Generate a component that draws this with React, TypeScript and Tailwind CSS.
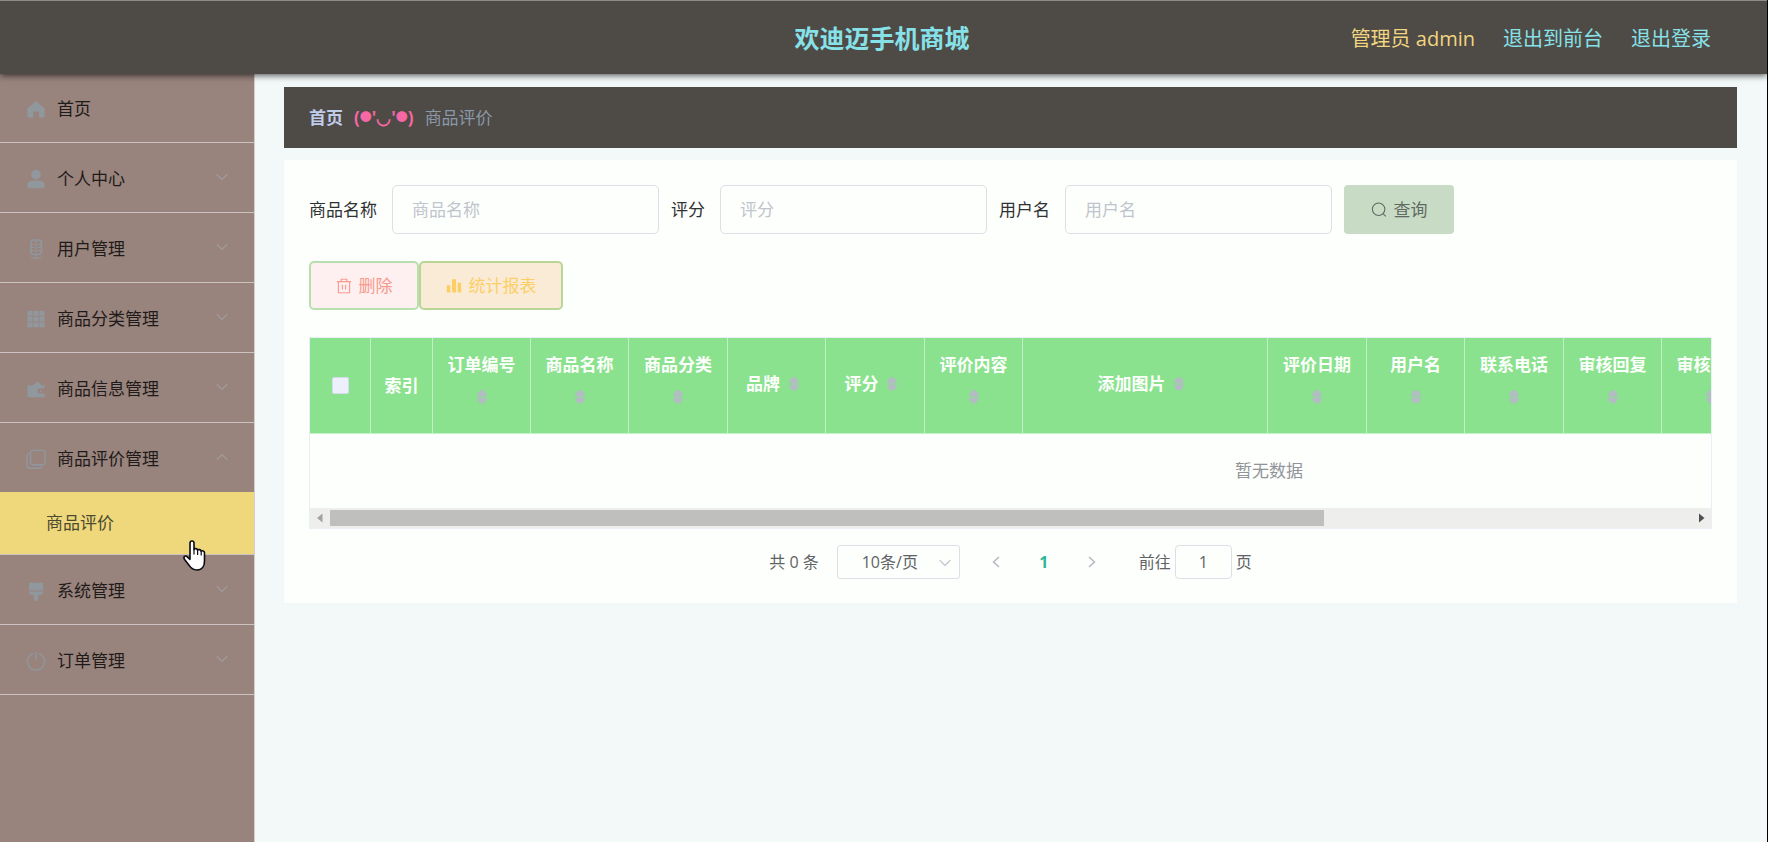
import type { ReactNode } from 'react';

const Icon = ({ children, className = 'size-5' }: { children: ReactNode; className?: string }) => (
  <svg viewBox="0 0 20 20" className={className} fill="none" stroke="currentColor" aria-hidden="true">
    {children}
  </svg>
);

const HomeIcon = () => (
  <Icon>
    <path fill="currentColor" stroke="none" d="M10 2 18.6 9.4V17.6a.8.8 0 0 1-.8.8H13V12.6H7.4V18.4H2.200a.8.8 0 0 1-.8-.8V9.400z" />
  </Icon>
);
const UserIcon = () => (
  <Icon>
    <circle cx="10" cy="5.600" r="4.800" fill="currentColor" stroke="none" />
    <path fill="currentColor" stroke="none" d="M6.600 11.800h7c3.200 0 5 2 5 4.400v1.200c0 1.200-.8 1.800-2 1.800H3.400c-1.200 0-2-.6-2-1.800v-1.200c0-2.400 2-4.400 5.200-4.400z" />
  </Icon>
);
const MicIcon = () => (
  <Icon>
    <rect x="5" y="1" width="10.500" height="14.500" rx="3" strokeWidth="1.600" />
    <path strokeWidth="1.200" d="M10.200 1v19M5 5.500h3.500M12 5.500h3.500M5 8.500h3.500M12 8.500h3.500M5 11.500h3.500M12 11.500h3.500M4.500 19h11.500" />
  </Icon>
);
const GridIcon = () => (
  <Icon>
    {[1.4, 7.4, 13.4].map((x) =>
      [1.8, 7.6, 13.4].map((y) => (
        <rect key={`${x}-${y}`} x={x} y={y} width="5.200" height="5" fill="currentColor" stroke="none" />
      )),
    )}
  </Icon>
);
const WalletIcon = () => (
  <Icon>
    <path fill="currentColor" stroke="none" d="M1.400 6.200h5.400L12 2.200l3.200 4h3.400v3h-4.400a2.700 2.700 0 0 0 0 5.400h4.400v3.600H1.400z" />
    <circle cx="14.800" cy="11.900" r="1" fill="currentColor" stroke="none" />
  </Icon>
);
const CopyIcon = () => (
  <Icon>
    <rect x="4.600" y="1.400" width="14.400" height="14.400" rx="2.200" strokeWidth="1.400" />
    <path strokeWidth="1.400" d="M4.600 4.400H3.400A2.400 2.400 0 0 0 1 6.800v10a2.400 2.400 0 0 0 2.400 2.400h10a2.400 2.400 0 0 0 2.400-2.400" />
  </Icon>
);
const BrushIcon = () => (
  <Icon>
    <path fill="currentColor" stroke="none" d="M3.600 1.800h13a.6.6 0 0 1 .6.600V9.400H3V2.400a.6.6 0 0 1 .6-.6zM3 10.600h14.200v.6a2.600 2.600 0 0 1-2.600 2.600h-2.200v4.400a1.600 1.600 0 0 1-1.600 1.600h-1.400a1.600 1.600 0 0 1-1.600-1.600v-4.400H5.600A2.600 2.600 0 0 1 3 11.200z" />
  </Icon>
);
const PowerIcon = () => (
  <Icon>
    <path strokeWidth="1.400" strokeLinecap="round" d="M10 1v7.600M6.600 2.800a8.500 8.500 0 1 0 6.800 0" />
  </Icon>
);
const Chevron = ({ className }: { className: string }) => (
  <svg viewBox="0 0 12 8" className={className} fill="none" stroke="currentColor" strokeWidth="1.200" strokeLinecap="round" aria-hidden="true">
    <path d="M1 1.500 6 6.500 11 1.500" />
  </svg>
);
const HandCursor = () => (
  <svg viewBox="0 0 24 32" className="pointer-events-none absolute top-[48px] left-[182px] z-10 h-8 w-6" aria-hidden="true">
    <path
      fill="#fff"
      stroke="#0b0b14"
      strokeWidth="1.600"
      strokeLinejoin="round"
      d="M8 3.200c0-3 4-3 4 0V9.500c.5-1.400 3.400-1.300 3.600.8.800-1.300 3.300-.9 3.500 1 .9-1 3.400-.6 3.400 1.500V21c0 5-2.400 9-7.500 9-4 0-6-1.500-8-4.800L2.600 19.500c-1.800-2.800.8-4.500 2.700-2.700L8 19.300z"
    />
    <path stroke="#0b0b14" strokeWidth="1.200" d="M12 9v5.500M15.600 10.500v4.500M19.200 11.500v4" />
  </svg>
);

const menu = [
  { label: '首页', icon: <HomeIcon />, leaf: true },
  { label: '个人中心', icon: <UserIcon /> },
  { label: '用户管理', icon: <MicIcon /> },
  { label: '商品分类管理', icon: <GridIcon /> },
  { label: '商品信息管理', icon: <WalletIcon /> },
  { label: '商品评价管理', icon: <CopyIcon />, child: '商品评价' },
  { label: '系统管理', icon: <BrushIcon /> },
  { label: '订单管理', icon: <PowerIcon /> },
];

const columns = [
  { label: '订单编号', width: 'w-[98px]' },
  { label: '商品名称', width: 'w-[98px]' },
  { label: '商品分类', width: 'w-[99px]' },
  { label: '品牌', width: 'w-[98px]' },
  { label: '评分', width: 'w-[99px]' },
  { label: '评价内容', width: 'w-[98px]' },
  { label: '添加图片', width: 'w-[245px]' },
  { label: '评价日期', width: 'w-[99px]' },
  { label: '用户名', width: 'w-[98px]' },
  { label: '联系电话', width: 'w-[99px]' },
  { label: '审核回复', width: 'w-[98px]' },
  { label: '审核状态', width: 'w-[98px]' },
];

const filters = [
  { id: 'goods', label: '商品名称' },
  { id: 'score', label: '评分' },
  { id: 'user', label: '用户名' },
];

function Sidebar() {
  return (
    <aside className="w-[255px] shrink-0 border-r border-[#d3cdcb] bg-[#98837d]">
      <ul>
        {menu.map((item) => (
          <li key={item.label}>
            <button
              type="button"
              className={`flex w-full items-center pt-[2px] pr-[26px] pl-[26px] text-[17px] text-[#1f1b1a] ${
                item.child ? 'h-[69px]' : 'h-[70px] border-b border-[#cbc3c0]'
              }`}
            >
              <span className="text-[#90979d]">{item.icon}</span>
              <span className="ml-[11px] flex-1 text-left">{item.label}</span>
              {!item.leaf && (
                <Chevron className={item.child ? 'mb-[4px] w-3 rotate-180 text-[#a09b9b]' : 'mb-[4px] w-3 text-[#a09b9b]'} />
              )}
            </button>
            {item.child && (
              <div className="relative">
                <a href="#reviews" className="flex h-[63px] items-center border-b border-[#cbc3c0] bg-[#efd87c] pl-[46px] text-[17px] text-[#4b4a30]">
                  {item.child}
                </a>
                <HandCursor />
              </div>
            )}
          </li>
        ))}
      </ul>
    </aside>
  );
}

function SortIcon() {
  return (
    <span className="flex h-[39px] w-[27px] items-center justify-center">
      <svg viewBox="0 0 12 16" className="h-4 w-3 fill-[#b3bbc3]" aria-hidden="true">
        <path d="M6 1C8.500 1.500 10.500 4.500 11 7.400H1C1.500 4.500 3.500 1.500 6 1zM6 15C3.500 14.500 1.500 11.500 1 8.600h10C10.500 11.500 8.500 14.500 6 15z" />
      </svg>
    </span>
  );
}

function ReviewTable() {
  const th = 'border-r border-b border-[#c3efc9] p-0 align-middle font-bold';
  return (
    <div className="border border-[#ebeef5]">
      <div className="overflow-hidden">
        <table className="w-[1918px] table-fixed border-separate border-spacing-0 text-[17px]">
          <thead>
            <tr className="h-[96px] bg-[#8ae28e] text-[#fdfffc]">
              <th className={`${th} w-[61px]`}>
                <input type="checkbox" aria-label="全选" className="mx-auto block size-[17px] appearance-none rounded-[2px] border border-[#d5dcee] bg-[#edf0fc]" />
              </th>
              <th className={`${th} w-[62px]`}>索引</th>
              {columns.map((c) => (
                <th key={c.label} className={`${th} ${c.width}`}>
                  <div className="flex flex-wrap items-center justify-center px-[11px] pb-[3px]">
                    <span className="leading-[26px]">{c.label}</span>
                    <SortIcon />
                  </div>
                </th>
              ))}
              <th className={th} aria-label="操作" />
            </tr>
          </thead>
          <tbody>
            <tr>
              <td colSpan={15} className="h-[74px] p-0 text-center text-[#909399]">暂无数据</td>
            </tr>
          </tbody>
        </table>
      </div>
      <div className="flex h-[20px] items-center bg-[#eeefed]">
        <svg viewBox="0 0 20 20" className="size-5 shrink-0 fill-[#a3a3a3]" aria-hidden="true">
          <path d="M12.500 5.500v9L7 10z" />
        </svg>
        <div className="flex-1">
          <div className="h-4 w-[73%] bg-[#bfc0bd]" />
        </div>
        <svg viewBox="0 0 20 20" className="size-5 shrink-0 fill-[#505050]" aria-hidden="true">
          <path d="M8 5.500v9L13.500 10z" />
        </svg>
      </div>
    </div>
  );
}

function Pagination() {
  return (
    <nav aria-label="分页" className="mt-[16px] flex items-center justify-center text-[16px] text-[#606266]">
      <span>共 0 条</span>
      <div className="relative ml-[18px]">
        <select aria-label="每页条数" className="block h-[34px] w-[123px] appearance-none rounded-[3px] border border-[#dcdfe6] bg-transparent pl-[24px]">
          <option>10条/页</option>
        </select>
        <Chevron className="pointer-events-none absolute top-[14px] right-[9px] w-3 text-[#c0c4cc]" />
      </div>
      <button type="button" aria-label="上一页" className="ml-[20px] flex w-[32px] justify-center text-[#b4b8c0]">
        <svg viewBox="0 0 8 12" className="h-3 w-2" fill="none" stroke="currentColor" strokeWidth="1.500"><path d="M7 1 1.500 6 7 11" /></svg>
      </button>
      <button type="button" className="ml-[12px] w-[40px] font-bold text-[#2db598]">1</button>
      <button type="button" aria-label="下一页" className="ml-[12px] flex w-[32px] justify-center text-[#b4b8c0]">
        <svg viewBox="0 0 8 12" className="h-3 w-2" fill="none" stroke="currentColor" strokeWidth="1.500"><path d="M1 1 6.500 6 1 11" /></svg>
      </button>
      <label htmlFor="page" className="ml-[31px]">前往</label>
      <input id="page" defaultValue="1" className="mx-[4px] h-[34px] w-[57px] rounded-[4px] border border-[#dcdfe6] bg-transparent text-center" />
      <span>页</span>
    </nav>
  );
}

export default function App() {
  return (
    <div className="flex min-h-screen flex-col border-r border-black bg-[#f3f8f9] font-['Open_Sans','Noto_Sans_CJK_SC',sans-serif]">
      <header className="relative z-10 grid h-[73px] grid-cols-[1fr_auto_1fr] items-center border-t border-[#8f8d8b] bg-[#4e4a46] pt-[3px] pr-[56px] pl-[53px] text-[20px] text-[#87e1e8] shadow-[0_1px_0_#4e4a46,0_2px_7px_rgba(0,0,0,0.75)]">
        <h1 className="col-start-2 text-[25px] font-bold">欢迪迈手机商城</h1>
        <div className="flex justify-end gap-[28px]">
          <span className="text-[#f1d580]">管理员 admin</span>
          <a href="#front">退出到前台</a>
          <a href="#logout">退出登录</a>
        </div>
      </header>
      <div className="flex flex-1">
        <Sidebar />
        <main className="min-w-0 flex-1 pt-[14px] pr-[30px] pl-[29px]">
          <nav aria-label="面包屑" className="flex h-[61px] items-center gap-[11px] bg-[#4e4a46] pl-[25px] text-[17px]">
            <a href="#home" className="font-bold text-[#c0ccec]">首页</a>
            <span className="flex items-center font-bold text-[#f568a5]">
              (<span className="text-[12px]">●</span>'◡'<span className="text-[12px]">●</span>)
            </span>
            <span className="text-[#8a98a8]">商品评价</span>
          </nav>
          <section className="mt-[12px] bg-[#fdfffc] px-[25px] pt-[25px] pb-[24px]">
            <form className="flex items-center gap-3 text-[17px] text-[#303133]">
              {filters.map((f) => (
                <div key={f.id} className="flex items-center gap-[15px]">
                  <label htmlFor={f.id}>{f.label}</label>
                  <input
                    id={f.id}
                    placeholder={f.label}
                    className="h-[49px] w-[267px] rounded-[5px] border border-[#dcdfe6] bg-transparent px-[19px] placeholder:text-[#c0c4cc]"
                  />
                </div>
              ))}
              <button type="button" className="flex h-[49px] w-[110px] items-center justify-center gap-[7px] rounded-[4px] bg-[#c8dbc5] text-[#606962]">
                <Icon className="size-4">
                  <circle cx="9.500" cy="9" r="7.800" strokeWidth="1.300" />
                  <path strokeWidth="1.300" d="m15 14.500 3.500 3.500" />
                </Icon>
                查询
              </button>
            </form>
            <div className="mt-[27px] flex text-[17px]">
              <button type="button" className="flex h-[49px] w-[110px] items-center justify-center gap-[7px] rounded-[5px] border-2 border-[#b9dfae] bg-[#fef0f0] text-[#f79a8d]">
                <Icon className="size-4">
                  <path strokeWidth="1.400" d="M1 4.500h18M6.500 4.500V1.500h7v3M3 4.500V18.500h14V4.500M8 8.500v6M12 8.500v6" />
                </Icon>
                删除
              </button>
              <button type="button" className="flex h-[49px] w-[144px] items-center justify-center gap-[7px] rounded-[5px] border-2 border-[#b9d696] bg-[#faebd7] text-[#fccf66]">
                <Icon className="size-4">
                  <path fill="currentColor" stroke="none" d="M1 9h4.500v9H1zM7.500 1.500H12.500V18h-5zM14.500 6H19v12h-4.500z" />
                </Icon>
                统计报表
              </button>
            </div>
            <div className="mt-[27px]">
              <ReviewTable />
            </div>
            <Pagination />
          </section>
        </main>
      </div>
    </div>
  );
}
